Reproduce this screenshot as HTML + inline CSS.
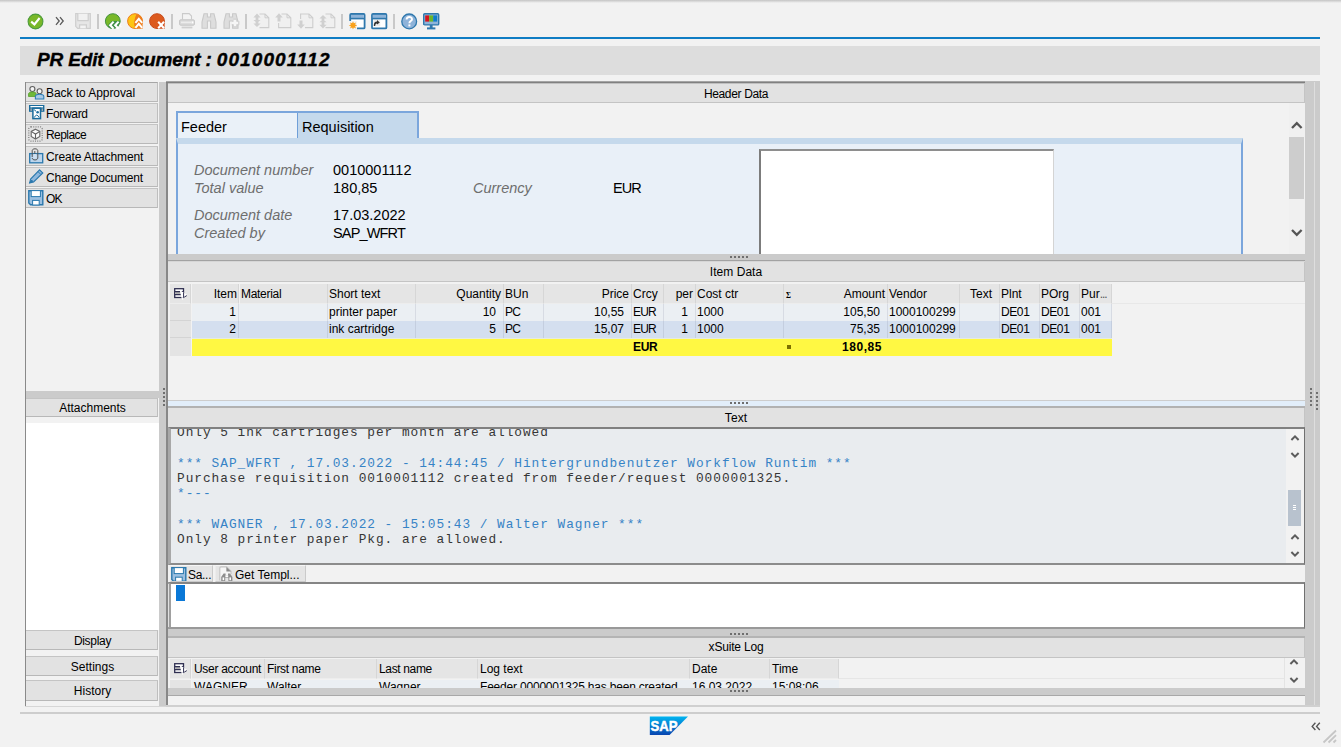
<!DOCTYPE html>
<html><head><meta charset="utf-8"><title>PR Edit Document</title>
<style>
*{box-sizing:border-box;margin:0;padding:0}
html,body{width:1341px;height:747px;overflow:hidden;background:#f2f2f2;font-family:"Liberation Sans",sans-serif;font-size:12px;color:#000}
.a{position:absolute}
svg{position:absolute;overflow:visible}
#topgrad{left:0;top:0;width:1341px;height:3px;background:linear-gradient(#c4c4c4,#f2f2f2)}
#blueline{left:20px;top:37px;width:1300px;height:2px;background:#0f7dc4}
#titlebar{left:20px;top:46px;width:1300px;height:29px;background:#dddddd}
#title{left:37px;top:48px;font-size:19px;font-weight:bold;font-style:italic;white-space:nowrap;line-height:24px;-webkit-text-stroke:.4px #000}
.tsep{position:absolute;top:14px;width:2px;height:15px;background:#c9c9c9;margin-left:-.5px}
/* left panel */
#lp{left:25px;top:82px;width:134px;height:624px;border-left:1px solid #8a8a8a}
.btn{position:absolute;left:0;width:132px;height:20px;background:#e2e2e2;border-top:1px solid #c4c4c4;border-bottom:1px solid #b8b8b8;border-right:1px solid #bebebe;line-height:18px;white-space:nowrap;font-size:12px}
.btn span{position:absolute;left:20px;top:1px}
.cbtn{text-align:center;line-height:20px;padding-left:2px}
.vs{position:absolute;background:#cbcbcb}
/* right panel */
.hdr{position:absolute;left:168px;width:1137px;background:#e2e2e2;text-align:center;font-size:12px;letter-spacing:-.35px;line-height:20px;height:19px;border-bottom:1px solid #c4c4c4;border-right:1px solid #c4c4c4}
.hs{position:absolute;left:168px;width:1137px;height:6px;background:#cbcbcb}
.dl{position:absolute;left:166px;width:1139px;height:1px;background:#8c8c8c}
.dots{position:absolute;left:730px;width:19px;height:2px;background:repeating-linear-gradient(90deg,#6e6e6e 0 2px,transparent 2px 4px)}
#statline{left:20px;top:712px;width:1300px;height:2px;background:#cdcdcd}
/* tabs */
.lbl{position:absolute;font-style:italic;color:#6e6e6e;font-size:14.5px;white-space:nowrap;line-height:18px}
.val{position:absolute;font-size:14.5px;white-space:nowrap;line-height:18px}
/* tables */
.th,.td{position:absolute;height:18px;line-height:17px;white-space:nowrap;font-size:12px;overflow:hidden}
.th{background:#e5e5e5;border-right:1px solid #d6d6d6;border-bottom:1px solid #ededed;height:20px;line-height:21px}
.r{text-align:right}
.mono{font-family:"Liberation Mono",monospace;font-size:12.8px;letter-spacing:.97px;line-height:15.34px;white-space:pre;position:absolute;left:6px;color:#363636}
.bl{color:#3683c6}
.sg{position:absolute;left:2px;top:0;font-family:"Liberation Serif",serif;font-weight:bold;font-size:7.5px;top:1px}
</style></head><body>
<div class="a" id="topgrad"></div>
<div class="a" id="blueline"></div>
<div class="a" id="titlebar"></div>
<div class="a" id="title"><span style="letter-spacing:-.15px">PR Edit Document : </span><span style="letter-spacing:1.1px">0010001112</span></div>
<div id="toolbar">
<svg style="left:27px;top:13px" width="17" height="17" viewBox="0 0 17 17"><circle cx="8.5" cy="8.5" r="7.4" fill="#7ab829" stroke="#4d9c3c" stroke-width="1.1"/><path d="M4.2 8.6 L7.4 11.4 L12.6 5" fill="none" stroke="#fff" stroke-width="2.1"/></svg>
<svg style="left:55px;top:16px" width="10" height="10" viewBox="0 0 10 10"><path d="M1 1.2 L4.2 5 L1 8.8 M5 1.2 L8.2 5 L5 8.8" fill="none" stroke="#5a5a5a" stroke-width="1.3"/></svg>
<svg style="left:75px;top:13px" width="16" height="16" viewBox="0 0 16 16"><path d="M.7 .7 H15.3 V15.3 H2.7 L.7 13.3 Z" fill="#e6e6e6" stroke="#cecece" stroke-width="1.2"/><path d="M2.8 .7 V7.6 H13.2 V.7" fill="#f1f1f1" stroke="#cecece" stroke-width="1.2"/><path d="M4.6 15.3 V11.8 H11.4 V15.3" fill="#f3f3f3" stroke="#cecece" stroke-width="1.2"/></svg>
<div class="tsep" style="left:97px"></div>
<svg style="left:105px;top:13px" width="17" height="17" viewBox="0 0 17 17"><circle cx="7.8" cy="8.1" r="7.4" fill="#79b829" stroke="#43923f" stroke-width="1"/><path d="M3 13.7 L3.6 11.2 L7 7.9 H15.2 A7.4 7.4 0 0 1 3 13.7 Z" fill="#3f8f46"/><path d="M8.6 8.6 L5.2 12.2 L8.6 15.8 M13.6 8.6 L10.2 12.2 L13.6 15.8" fill="none" stroke="#fff" stroke-width="2.1"/><path d="M16.4 10.2 L14.6 12.2 L16.4 14.2" fill="none" stroke="#fff" stroke-width="1.4" opacity=".7"/></svg>
<svg style="left:127px;top:13px" width="17" height="17" viewBox="0 0 17 17"><circle cx="8" cy="8.1" r="7.4" fill="#fdc513" stroke="#ee7d1c" stroke-width="1"/><path d="M9.6 .9 A7.6 7.6 0 0 1 15.6 8.1 V15.8 H8.4 Q6.6 12.4 7.2 8.4 Q7.8 4 9.6 .9Z" fill="#ee7d1c"/><path d="M8.4 9.8 L11.8 5.8 L15.2 9.8 M8.4 14.8 L11.8 10.8 L15.2 14.8" fill="none" stroke="#fff" stroke-width="2"/></svg>
<svg style="left:149px;top:13px" width="17" height="17" viewBox="0 0 17 17"><circle cx="8" cy="8.1" r="7.4" fill="#dc5a1e" stroke="#c94b1b" stroke-width="1"/><path d="M9 9 H15.6 V15.8 H9.6Z" fill="#d14e1b"/><path d="M9.2 8.8 L15 15.2 M15 8.8 L9.2 15.2" fill="none" stroke="#fff" stroke-width="2.1"/></svg>
<div class="tsep" style="left:171px"></div>
<svg style="left:179px;top:13px" width="16" height="16" viewBox="0 0 16 16"><path d="M3.5 6.5 V.6 H10.2 L12.5 3 V6.5" fill="#f4f4f4" stroke="#cbcbcb" stroke-width="1.1"/><rect x=".6" y="6.8" width="14.8" height="5.4" rx="1" fill="#d9d9d9" stroke="#c6c6c6" stroke-width="1"/><rect x="2" y="8.6" width="10" height="1.6" fill="#ececec"/><rect x="12.6" y="8.4" width="1.8" height="2" fill="#fff"/><rect x="2.6" y="13.6" width="10.8" height="1.8" fill="#cfcfcf"/></svg>
<svg style="left:201px;top:13px" width="16" height="16" viewBox="0 0 16 16"><path d="M3 .8 H6.4 V4 H9.6 V.8 H13 L15 9 V15.2 H9.6 V8 H6.4 V15.2 H1 V9 Z" fill="#dedede" stroke="#c9c9c9" stroke-width="1.1"/></svg>
<svg style="left:223px;top:13px" width="17" height="16" viewBox="0 0 17 16"><path d="M3 .8 H6.4 V4 H9.6 V.8 H13 L15 9 V15.2 H9.6 V8 H6.4 V15.2 H1 V9 Z" fill="#dedede" stroke="#c9c9c9" stroke-width="1.1"/><path d="M12 7 V13 M9 10 H15" stroke="#f6f6f6" stroke-width="2.4"/><path d="M10.2 6 H13.8 V8.2 H16 V11.8 H13.8 V14 H10.2 V11.8 H8.6" fill="none" stroke="#cfcfcf" stroke-width=".8"/></svg>
<div class="tsep" style="left:245px"></div>
<svg style="left:253px;top:13px" width="17" height="16" viewBox="0 0 17 16"><path d="M6.5 1 H12 L15.8 4.8 V14.6 H6.5" fill="#f0f0f0" stroke="#cdcdcd" stroke-width="1.1"/><path d="M12 1 V4.8 H15.8" fill="none" stroke="#cdcdcd" stroke-width="1"/><path d="M4 .5 L7.6 4.4 H5.4 V7 H7.6 L4 10 L.4 7 H2.6 V4.4 H.4Z M4 14 L.4 10.6 H2.6 V9 H5.4 V10.6 H7.6Z" fill="#d0d0d0"/></svg>
<svg style="left:275px;top:13px" width="17" height="16" viewBox="0 0 17 16"><path d="M6.5 1 H12 L15.8 4.8 V14.6 H3.6 V10" fill="#f0f0f0" stroke="#cdcdcd" stroke-width="1.1"/><path d="M12 1 V4.8 H15.8" fill="none" stroke="#cdcdcd" stroke-width="1"/><path d="M4 .3 L7.8 4.6 H5.5 V8.6 H2.5 V4.6 H.2Z" fill="#d0d0d0"/></svg>
<svg style="left:297px;top:13px" width="17" height="16" viewBox="0 0 17 16"><path d="M3.6 6 V1 H12 L15.8 4.8 V14.6 H8" fill="#f0f0f0" stroke="#cdcdcd" stroke-width="1.1"/><path d="M12 1 V4.8 H15.8" fill="none" stroke="#cdcdcd" stroke-width="1"/><path d="M4 15.8 L7.8 11.4 H5.5 V7.4 H2.5 V11.4 H.2Z" fill="#d0d0d0"/></svg>
<svg style="left:319px;top:13px" width="17" height="16" viewBox="0 0 17 16"><path d="M6.5 1 H12 L15.8 4.8 V14.6 H6.5" fill="#f0f0f0" stroke="#cdcdcd" stroke-width="1.1"/><path d="M12 1 V4.8 H15.8" fill="none" stroke="#cdcdcd" stroke-width="1"/><path d="M4 15.6 L.4 11.8 H2.6 V9.2 H.4 L4 6.2 L7.6 9.2 H5.4 V11.8 H7.6Z M4 2 L7.6 5.4 H5.4 V7 H2.6 V5.4 H.4Z" fill="#d0d0d0"/></svg>
<div class="tsep" style="left:341px"></div>
<svg style="left:349px;top:13px" width="17" height="17" viewBox="0 0 17 17"><rect x="1.2" y="1" width="14.4" height="14.4" rx="1" fill="#fff" stroke="#2f78ad" stroke-width="1.8"/><rect x="2" y="1.8" width="12.8" height="3.2" fill="#8fb4d9"/><path d="M1.2 5.6 H15.6" stroke="#2f78ad" stroke-width="1.6"/><rect x="0" y="8" width="8" height="9" fill="#f2f2f2"/><path d="M4 8.2 L4.9 10.3 L7 9.4 L6.1 11.5 L8.2 12.4 L6.1 13.3 L7 15.4 L4.9 14.5 L4 16.6 L3.1 14.5 L1 15.4 L1.9 13.3 L-.2 12.4 L1.9 11.5 L1 9.4 L3.1 10.3Z" fill="#f9a11b"/></svg>
<svg style="left:371px;top:13px" width="17" height="17" viewBox="0 0 17 17"><rect x="1" y="1" width="14.4" height="14.4" rx="1" fill="#fff" stroke="#2f78ad" stroke-width="1.8"/><rect x="1.8" y="1.8" width="12.8" height="3.2" fill="#8fb4d9"/><path d="M1 5.6 H15.4" stroke="#2f78ad" stroke-width="1.6"/><rect x="2.6" y="6.8" width="6.6" height="6.4" fill="#000" opacity=".08"/><path d="M2.8 13 C2.6 10 4 8.6 6 8.6 V7 L8.8 9.4 L6 11.6 V10.4 C4.8 10.4 4.2 11.2 4.2 13Z" fill="#333"/></svg>
<div class="tsep" style="left:393px"></div>
<svg style="left:401px;top:13px" width="17" height="17" viewBox="0 0 17 17"><circle cx="8.2" cy="8.4" r="7.4" fill="#8fb3d9" stroke="#2f78ad" stroke-width="1.3"/><path d="M5.6 6.4 C5.6 3.2 11 3.2 11 6.2 C11 8.2 8.4 8 8.4 10.2" fill="none" stroke="#fff" stroke-width="1.9"/><rect x="7.4" y="11.4" width="2" height="2" fill="#fff"/></svg>
<svg style="left:423px;top:13px" width="17" height="17" viewBox="0 0 17 17"><rect x=".7" y=".7" width="15" height="11.2" rx="1" fill="#8fb4d9" stroke="#2f78ad" stroke-width="1.4"/><rect x="2.2" y="2.4" width="4" height="6.2" fill="#d4141c"/><rect x="6.2" y="2.4" width="4" height="6.2" fill="#6bb52a"/><rect x="10.2" y="2.4" width="4" height="6.2" fill="#0f7dc8"/><rect x="6.8" y="12" width="2.8" height="3" fill="#2f78ad"/><rect x="4" y="14.4" width="8.4" height="2" fill="#2f78ad"/></svg>
</div>

<div class="a" id="lp">
 <div class="btn" style="top:0;border-top-color:#a6a6a6"><svg style="left:2px;top:3px" width="17" height="14" viewBox="0 0 17 14"><circle cx="4.4" cy="3" r="2.5" fill="#f4f4f4" stroke="#5e5e5e" stroke-width="1.1"/><path d="M.5 10.5 V8.2 C.5 6.6 2 6 4.4 6 C6.8 6 8.3 6.6 8.3 8.2 V10.5Z" fill="#6fb83a" stroke="#58a02c" stroke-width=".8"/><circle cx="11.6" cy="5.2" r="2.5" fill="#f4f4f4" stroke="#5e5e5e" stroke-width="1.1"/><path d="M7.4 13 V10.6 C7.4 9 9 8.3 11.6 8.3 C14.2 8.3 15.8 9 15.8 10.6 V13Z" fill="#a9c9e6" stroke="#2f7fb8" stroke-width="1.1"/></svg><span style="letter-spacing:-0.06px">Back to Approval</span></div>
 <div class="btn" style="top:21px"><svg style="left:3px;top:1px" width="16" height="15" viewBox="0 0 16 15"><rect x="0" y="0" width="15.4" height="6.8" fill="#1b6c9c"/><rect x="1.4" y="1" width="12.6" height="1.4" fill="#fff"/><rect x="1.4" y="3.4" width="1.5" height="2.6" fill="#9aa6ae"/><rect x="12.5" y="3.4" width="1.5" height="2.6" fill="#9aa6ae"/><rect x="3.9" y="3.2" width="7.6" height="10.4" fill="#fff" stroke="#1b6c9c" stroke-width="1.5"/><circle cx="8.6" cy="7.2" r="1.3" fill="#1b6c9c"/><path d="M5.2 12.6 Q7.7 7.6 10.2 12.6 M5 4.6 L7 6.2" fill="none" stroke="#1b6c9c" stroke-width="1"/></svg><span style="letter-spacing:-0.33px">Forward</span></div>
 <div class="btn" style="top:42px"><svg style="left:2px;top:1px" width="15" height="16" viewBox="0 0 15 16"><rect x=".8" y=".8" width="13.4" height="14.4" rx="2.2" fill="none" stroke="#808080" stroke-width="1.2" stroke-dasharray="1 1.25"/><path d="M7.5 3.2 L11.8 5.4 V10.4 L7.5 13 L3.2 10.4 V5.4Z" fill="#fbfbfb" stroke="#6a6a6a" stroke-width="1.1"/><path d="M3.4 5.6 L7.5 8 L11.6 5.6 M7.5 8 V12.8" fill="none" stroke="#606060" stroke-width="1.1"/></svg><span style="letter-spacing:-0.55px">Replace</span></div>
 <div class="btn" style="top:64px"><svg style="left:3px;top:1px" width="15" height="16" viewBox="0 0 15 16"><rect x=".7" y="5.6" width="13" height="9.2" fill="#bcd5ec" stroke="#2a78ad" stroke-width="1.3"/><path d="M3.2 9 V2.6 C3.2 .2 8.8 .2 8.8 2.6 V10 C8.8 12.6 3.2 12.6 3.2 10 M5.8 3 V9" fill="none" stroke="#555" stroke-width="1"/><path d="M4.4 6 V10 C4.4 11 7.4 11 7.4 10 V6" fill="#cfe0f0" stroke="none"/></svg><span style="letter-spacing:-0.13px">Create Attachment</span></div>
 <div class="btn" style="top:85px"><svg style="left:3px;top:1px" width="15" height="15" viewBox="0 0 15 15"><path d="M10.6 .8 L13.8 4 L4.6 13 L.6 14 L1.6 10Z" fill="#8fb8dd" stroke="#2a78ad" stroke-width="1.1"/><path d="M9 2.6 L12 5.6 M.8 13.8 L2.6 11 L3.8 12.4Z" fill="#2a78ad" stroke="#2a78ad" stroke-width="1"/></svg><span style="letter-spacing:-0.22px">Change Document</span></div>
 <div class="btn" style="top:106px"><svg style="left:2px;top:1px" width="16" height="16" viewBox="0 0 16 16"><path d="M.8 .8 H14.8 V14.8 H2.6 L.8 13Z" fill="#9dc0e0" stroke="#2a78ad" stroke-width="1.4"/><rect x="3.2" y=".6" width="9.2" height="6" fill="#fff" stroke="#2a78ad" stroke-width="1"/><rect x="4.6" y="10.4" width="6.6" height="4.6" fill="#fff" stroke="#2a78ad" stroke-width="1"/></svg><span style="letter-spacing:-0.9px">OK</span></div>
 <div class="vs" style="left:0;top:309px;width:133px;height:7px"></div>
 <div class="btn cbtn" style="top:316px;height:19px;line-height:19px">Attachments</div>
 <div class="a" style="left:0;top:341px;width:133px;height:207px;background:#fff"></div>
 <div class="btn cbtn" style="top:548px;letter-spacing:-.3px">Display</div>
 <div class="btn cbtn" style="top:574px">Settings</div>
 <div class="btn cbtn" style="top:598px;height:21px">History</div>
</div>
<div class="vs" style="left:159px;top:82px;width:7px;height:624px"></div>
<div class="vs" style="left:1305px;top:81px;width:15px;height:625px"></div>
<div class="a" style="left:1314px;top:82px;width:1px;height:624px;background:#dedede"></div>
<div class="a" style="left:166px;top:81px;width:2px;height:625px;background:#888"></div>

<div class="a" style="left:163px;top:388px;width:2px;height:18px;background:repeating-linear-gradient(180deg,#707070 0 2px,transparent 2px 4px)"></div>
<div class="a" style="left:1310px;top:388px;width:2px;height:18px;background:repeating-linear-gradient(180deg,#707070 0 2px,transparent 2px 4px)"></div>
<div class="a" style="left:1316px;top:392px;width:2px;height:18px;background:repeating-linear-gradient(180deg,#707070 0 2px,transparent 2px 4px)"></div>
<!-- Header Data -->
<div class="dl" style="top:81px;height:1px;background:#a4a4a4"></div><div class="dl" style="top:82px;height:1px;background:#808080"></div><div class="dl" style="top:83px;left:168px;width:1137px;height:1px;background:#c0c0c0"></div>
<div class="hdr" style="top:84px">Header Data</div>
<div id="tabs">
 <div class="a" style="left:176px;top:111px;width:243px;height:28px;background:#eaf1f8;border:2px solid #7ba6dc;border-bottom:none"></div>
 <div class="a" style="left:297px;top:113px;width:120px;height:26px;background:#c5d9ec;border-left:1px solid #6f9fd8"></div>
 <div class="a" style="left:176px;top:138px;width:1067px;height:116px;background:#e9f0f8;border-left:2px solid #7ba6dc;border-right:2px solid #7ba6dc;border-top:6px solid #c5d9ec"></div>
 <div class="val" style="left:181px;top:118px">Feeder</div>
 <div class="val" style="left:302px;top:118px">Requisition</div>
 <div class="lbl" style="left:194px;top:161px">Document number</div><div class="val" style="left:333px;top:161px">0010001112</div>
 <div class="lbl" style="left:194px;top:179px">Total value</div><div class="val" style="left:333px;top:179px">180,85</div>
 <div class="lbl" style="left:473px;top:179px">Currency</div><div class="val" style="left:613px;top:179px;letter-spacing:-1px">EUR</div>
 <div class="lbl" style="left:194px;top:206px">Document date</div><div class="val" style="left:333px;top:206px">17.03.2022</div>
 <div class="lbl" style="left:194px;top:224px">Created by</div><div class="val" style="left:333px;top:224px;letter-spacing:-.85px">SAP_WFRT</div>
 <div class="a" style="left:759px;top:149px;width:295px;height:105px;background:#fff;border-top:2px solid #8e8e8e;border-left:2px solid #7c7c7c;border-right:1px solid #d4d4d4"></div>
 <!-- scrollbar -->
 <div class="a" style="left:1289px;top:103px;width:16px;height:151px;background:#f0f0f0"></div>
 <div class="a" style="left:1289px;top:137px;width:15px;height:62px;background:#cdcdcd"></div>
 <svg style="left:1289px;top:118px" width="16" height="14"><path d="M3 10 L7.8 5.2 L12.6 10" fill="none" stroke="#555" stroke-width="2.3"/></svg>
 <svg style="left:1289px;top:225px" width="16" height="14"><path d="M3 5 L7.8 9.8 L12.6 5" fill="none" stroke="#555" stroke-width="2.3"/></svg>
</div>

<!-- Item Data -->
<div class="hs" style="top:254px"></div><div class="dots" style="top:256px"></div>
<div class="dl" style="left:168px;width:1137px;top:260px;background:#a2a2a2"></div><div class="dl" style="left:168px;width:1137px;top:261px;background:#d6d6d6"></div>
<div class="hdr" style="top:262px;height:20px;line-height:20px;letter-spacing:.05px">Item Data</div>
<div id="items">
<div class="th" style="left:170px;top:284px;width:21px"><svg style="left:4px;top:4px" width="14" height="12" viewBox="0 0 14 12"><rect x=".7" y=".7" width="8.8" height="8.8" fill="#fff" stroke="#2e2e50" stroke-width="1.3"/><rect x="1.3" y="4" width="7.6" height="2.2" fill="#b0b0b0"/><path d="M.7 3.6 H9.5 M.7 6.6 H9.5" stroke="#2e2e50" stroke-width="1.1"/><path d="M6.8 3.6 L12.4 7.3 L9.7 8 L8.6 10.8 Z" fill="#fff" stroke="#fff" stroke-width="1.6" stroke-linejoin="round"/><path d="M9.6 4.6 V9.6 H8.8 M10.4 9 L12.8 7.6" fill="none" stroke="#2e2e50" stroke-width="1"/></svg></div>
<div class="th" style="left:192px;top:284px;width:47px;padding-right:1px;text-align:right">Item</div>
<div class="th" style="left:240px;top:284px;width:88px;padding-left:1px;letter-spacing:-.3px">Material</div>
<div class="th" style="left:328px;top:284px;width:88px;padding-left:1px">Short text</div>
<div class="th" style="left:416px;top:284px;width:88px;padding-right:2px;text-align:right">Quantity</div>
<div class="th" style="left:504px;top:284px;width:40px;padding-left:1px">BUn</div>
<div class="th" style="left:544px;top:284px;width:88px;padding-right:2px;text-align:right">Price</div>
<div class="th" style="left:632px;top:284px;width:32px;padding-left:1px">Crcy</div>
<div class="th" style="left:664px;top:284px;width:32px;padding-right:2px;text-align:right">per</div>
<div class="th" style="left:696px;top:284px;width:88px;padding-left:1px">Cost ctr</div>
<div class="th" style="left:784px;top:284px;width:16px;border-right:none"><span class="sg">&#931;</span></div>
<div class="th" style="left:800px;top:284px;width:88px;padding-right:2px;text-align:right">Amount</div>
<div class="th" style="left:888px;top:284px;width:72px;padding-left:1px">Vendor</div>
<div class="th" style="left:960px;top:284px;width:40px;padding-right:7px;text-align:right">Text</div>
<div class="th" style="left:1000px;top:284px;width:40px;padding-left:1px">Plnt</div>
<div class="th" style="left:1040px;top:284px;width:40px;padding-left:1px">POrg</div>
<div class="th" style="left:1080px;top:284px;width:32px;padding-left:1px">Pur<span style="letter-spacing:-1px;color:#555">...</span></div>
<div class="a" style="left:170px;top:304px;width:21px;height:17px;background:#e4e4e4;border-bottom:1px solid #d4d4d4"></div>
<div class="a" style="left:192px;top:304px;width:920px;height:17px;background:#ebeff3"></div>
<div class="td" style="left:192px;top:304px;width:47px;border-right:1px solid rgba(110,120,140,.16);padding-right:2px;text-align:right">1</div>
<div class="td" style="left:240px;top:304px;width:88px;border-right:1px solid rgba(110,120,140,.16);padding-left:1px"></div>
<div class="td" style="left:328px;top:304px;width:88px;border-right:1px solid rgba(110,120,140,.16);padding-left:1px">printer paper</div>
<div class="td" style="left:416px;top:304px;width:88px;border-right:1px solid rgba(110,120,140,.16);padding-right:7px;text-align:right">10</div>
<div class="td" style="left:504px;top:304px;width:40px;border-right:1px solid rgba(110,120,140,.16);padding-left:1px;letter-spacing:-.8px">PC</div>
<div class="td" style="left:544px;top:304px;width:88px;border-right:1px solid rgba(110,120,140,.16);padding-right:7px;text-align:right">10,55</div>
<div class="td" style="left:632px;top:304px;width:32px;border-right:1px solid rgba(110,120,140,.16);padding-left:1px;letter-spacing:-.8px">EUR</div>
<div class="td" style="left:664px;top:304px;width:32px;border-right:1px solid rgba(110,120,140,.16);padding-right:7px;text-align:right">1</div>
<div class="td" style="left:696px;top:304px;width:88px;border-right:1px solid rgba(110,120,140,.16);padding-left:1px">1000</div>
<div class="td" style="left:784px;top:304px;width:16px;padding-left:1px"></div>
<div class="td" style="left:800px;top:304px;width:88px;border-right:1px solid rgba(110,120,140,.16);padding-right:7px;text-align:right">105,50</div>
<div class="td" style="left:888px;top:304px;width:72px;border-right:1px solid rgba(110,120,140,.16);padding-left:1px">1000100299</div>
<div class="td" style="left:960px;top:304px;width:40px;border-right:1px solid rgba(110,120,140,.16);padding-right:7px;text-align:right"></div>
<div class="td" style="left:1000px;top:304px;width:40px;border-right:1px solid rgba(110,120,140,.16);padding-left:1px;letter-spacing:-.4px">DE01</div>
<div class="td" style="left:1040px;top:304px;width:40px;border-right:1px solid rgba(110,120,140,.16);padding-left:1px;letter-spacing:-.4px">DE01</div>
<div class="td" style="left:1080px;top:304px;width:32px;border-right:1px solid rgba(110,120,140,.16);padding-left:1px">001</div>
<div class="a" style="left:170px;top:321px;width:21px;height:17px;background:#e4e4e4;border-bottom:1px solid #d4d4d4"></div>
<div class="a" style="left:192px;top:321px;width:920px;height:17px;background:#d4dfef"></div>
<div class="td" style="left:192px;top:321px;width:47px;border-right:1px solid rgba(110,120,140,.16);padding-right:2px;text-align:right">2</div>
<div class="td" style="left:240px;top:321px;width:88px;border-right:1px solid rgba(110,120,140,.16);padding-left:1px"></div>
<div class="td" style="left:328px;top:321px;width:88px;border-right:1px solid rgba(110,120,140,.16);padding-left:1px">ink cartridge</div>
<div class="td" style="left:416px;top:321px;width:88px;border-right:1px solid rgba(110,120,140,.16);padding-right:7px;text-align:right">5</div>
<div class="td" style="left:504px;top:321px;width:40px;border-right:1px solid rgba(110,120,140,.16);padding-left:1px;letter-spacing:-.8px">PC</div>
<div class="td" style="left:544px;top:321px;width:88px;border-right:1px solid rgba(110,120,140,.16);padding-right:7px;text-align:right">15,07</div>
<div class="td" style="left:632px;top:321px;width:32px;border-right:1px solid rgba(110,120,140,.16);padding-left:1px;letter-spacing:-.8px">EUR</div>
<div class="td" style="left:664px;top:321px;width:32px;border-right:1px solid rgba(110,120,140,.16);padding-right:7px;text-align:right">1</div>
<div class="td" style="left:696px;top:321px;width:88px;border-right:1px solid rgba(110,120,140,.16);padding-left:1px">1000</div>
<div class="td" style="left:784px;top:321px;width:16px;padding-left:1px"></div>
<div class="td" style="left:800px;top:321px;width:88px;border-right:1px solid rgba(110,120,140,.16);padding-right:7px;text-align:right">75,35</div>
<div class="td" style="left:888px;top:321px;width:72px;border-right:1px solid rgba(110,120,140,.16);padding-left:1px">1000100299</div>
<div class="td" style="left:960px;top:321px;width:40px;border-right:1px solid rgba(110,120,140,.16);padding-right:7px;text-align:right"></div>
<div class="td" style="left:1000px;top:321px;width:40px;border-right:1px solid rgba(110,120,140,.16);padding-left:1px;letter-spacing:-.4px">DE01</div>
<div class="td" style="left:1040px;top:321px;width:40px;border-right:1px solid rgba(110,120,140,.16);padding-left:1px;letter-spacing:-.4px">DE01</div>
<div class="td" style="left:1080px;top:321px;width:32px;border-right:1px solid rgba(110,120,140,.16);padding-left:1px">001</div>
<div class="a" style="left:170px;top:338px;width:21px;height:18px;background:#e4e4e4"></div>
<div class="a" style="left:192px;top:338px;width:920px;height:18px;background:#fff843;border-top:1px solid #e6ebe0"></div>
<div class="td" style="left:632px;top:338px;width:40px;padding-left:1px;font-weight:bold;letter-spacing:-.3px;height:18px;line-height:18px">EUR</div>
<div class="a" style="left:787px;top:345px;width:4px;height:4px;background:#7d7000"></div>
<div class="td r" style="left:800px;top:338px;width:88px;padding-right:6px;font-weight:bold;letter-spacing:.55px;height:18px;line-height:18px">180,85</div>
<div class="a" style="left:1112px;top:303px;width:193px;height:1px;background:#e8e8e8"></div>
</div>
<div class="a" style="left:168px;top:400px;width:1137px;height:6px;background:#e2eefa;border-top:1px solid #cdcdcd"></div>
<div class="dots" style="top:402px"></div>

<!-- Text -->
<div class="dl" style="left:168px;width:1137px;top:406px;height:2px;background:#b2b2b2"></div>
<div class="hdr" style="top:408px;border-bottom:none;letter-spacing:.1px">Text</div>
<div class="a" id="ta" style="left:168px;top:427px;width:1137px;height:138px;background:#e9ecef;border-top:2px solid #808080;border-left:3px solid #a8a8a8;border-right:1px solid #707070;border-bottom:2px solid #8c8c8c;overflow:hidden">
<div class="a" style="left:-3px;top:0;width:1px;height:137px;background:#ececec"></div>
<div class="a" style="left:1115px;top:0;width:18px;height:134px;background:#f2f2f2"></div>
<div class="a" style="left:1117px;top:61px;width:13px;height:36px;background:#b8c2ce"></div>
<div class="a" style="left:1122px;top:76px;width:3px;height:1px;background:#fff;box-shadow:0 2px 0 #fff,0 4px 0 #fff"></div>
<svg style="left:1119px;top:5px" width="10" height="8"><path d="M1.4 6 L5 2.4 L8.6 6" fill="none" stroke="#5c5c5c" stroke-width="2"/></svg>
<svg style="left:1119px;top:22px" width="10" height="8"><path d="M1.4 2 L5 5.6 L8.6 2" fill="none" stroke="#5c5c5c" stroke-width="2"/></svg>
<svg style="left:1119px;top:104px" width="10" height="8"><path d="M1.4 6 L5 2.4 L8.6 6" fill="none" stroke="#5c5c5c" stroke-width="2"/></svg>
<svg style="left:1119px;top:121px" width="10" height="8"><path d="M1.4 2 L5 5.6 L8.6 2" fill="none" stroke="#5c5c5c" stroke-width="2"/></svg>
<div class="mono" style="top:-4px">Only 5 ink cartridges per month are allowed

<span class="bl">*** SAP_WFRT , 17.03.2022 - 14:44:45 / Hintergrundbenutzer Workflow Runtim ***</span>
Purchase requisition 0010001112 created from feeder/request 0000001325.
<span class="bl">*---</span>

<span class="bl">*** WAGNER , 17.03.2022 - 15:05:43 / Walter Wagner ***</span>
Only 8 printer paper Pkg. are allowed.</div>
</div>
<div class="a" style="left:170px;top:565px;width:43px;height:17px;background:#e5e5e5;border:1px solid #cacaca;border-top-color:#f6f6f6;border-left-color:#ececec;font-size:12px;letter-spacing:-.3px;line-height:19px;padding-left:17px;white-space:nowrap;overflow:hidden"><svg style="left:0;top:1px" width="16" height="15" viewBox="0 0 16 15"><path d="M.8 .8 H14.8 V14.2 H2.6 L.8 12.4Z" fill="#9dc0e0" stroke="#2a78ad" stroke-width="1.4"/><rect x="3.2" y=".6" width="9.2" height="6" fill="#fff" stroke="#2a78ad" stroke-width="1"/><rect x="4.6" y="10.2" width="6.6" height="4.2" fill="#fff" stroke="#2a78ad" stroke-width="1"/></svg>Sa...</div>
<div class="a" style="left:215px;top:565px;width:91px;height:17px;background:#e5e5e5;border:1px solid #cacaca;border-top-color:#f6f6f6;border-left-color:#ececec;font-size:12px;line-height:19px;padding-left:19px;white-space:nowrap;overflow:hidden"><svg style="left:3px;top:0" width="15" height="16" viewBox="0 0 15 16"><path d="M.8 14.6 V2 Q.8 .9 2 .9 H7.6 L12 5.2 V8" fill="#f6f6f6" stroke="#c4c4c4" stroke-width="1.1"/><path d="M7.4 .9 V5.4 H12Z" fill="#8a8a8a"/><path d="M4.6 7.6 H6.6 V9 H9 V7.6 H11 L13.4 11 V15 H9.4 V11.8 H6.2 V15 H2.2 V11Z" fill="#8e8e8e"/><rect x="3.6" y="11.4" width="1.6" height="2.8" fill="#fff"/><rect x="10.4" y="11.4" width="1.6" height="2.8" fill="#fff"/><rect x="6.4" y="9.2" width="2.8" height="2" fill="#fff"/></svg>Get Templ...</div>
<div class="a" style="left:168px;top:582px;width:1137px;height:47px;background:#fff;border-top:2px solid #858585;border-left:3px solid #a0a0a0;border-right:1px solid #707070;border-bottom:2px solid #999"></div><div class="a" style="left:168px;top:584px;width:1px;height:43px;background:#e0e0e0"></div>
<div class="a" style="left:176px;top:585px;width:9px;height:16px;background:#0a78d7"></div>

<!-- xSuite Log -->
<div class="hs" style="top:629px;height:9px;border-bottom:2px solid #b4b4b4"></div><div class="dots" style="top:633px"></div>
<div class="hdr" style="top:638px;height:20px;line-height:19px;letter-spacing:-.19px">xSuite Log</div>
<div id="log">
<div class="th" style="left:170px;top:659px;width:21px"><svg style="left:4px;top:4px" width="14" height="12" viewBox="0 0 14 12"><rect x=".7" y=".7" width="8.8" height="8.8" fill="#fff" stroke="#2e2e50" stroke-width="1.3"/><rect x="1.3" y="4" width="7.6" height="2.2" fill="#b0b0b0"/><path d="M.7 3.6 H9.5 M.7 6.6 H9.5" stroke="#2e2e50" stroke-width="1.1"/><path d="M6.8 3.6 L12.4 7.3 L9.7 8 L8.6 10.8 Z" fill="#fff" stroke="#fff" stroke-width="1.6" stroke-linejoin="round"/><path d="M9.6 4.6 V9.6 H8.8 M10.4 9 L12.8 7.6" fill="none" stroke="#2e2e50" stroke-width="1"/></svg></div>
<div class="th" style="left:192px;top:659px;width:73px;padding-left:2px;letter-spacing:-0.3px">User account</div>
<div class="th" style="left:265px;top:659px;width:112px;padding-left:2px;letter-spacing:-0.3px">First name</div>
<div class="th" style="left:377px;top:659px;width:101px;padding-left:2px;letter-spacing:-0.35px">Last name</div>
<div class="th" style="left:478px;top:659px;width:212px;padding-left:2px;letter-spacing:0px">Log text</div>
<div class="th" style="left:690px;top:659px;width:80px;padding-left:2px;letter-spacing:0px">Date</div>
<div class="th" style="left:770px;top:659px;width:69px;padding-left:2px;letter-spacing:0px">Time</div>
<div class="a" style="left:170px;top:680px;width:21px;height:9px;background:#e4e4e4"></div>
<div class="a" style="left:192px;top:680px;width:647px;height:9px;background:#ebeff3"></div>
<div class="td" style="left:192px;top:680px;width:73px;height:9px;padding-left:2px;letter-spacing:0px;line-height:15px">WAGNER</div>
<div class="td" style="left:265px;top:680px;width:112px;height:9px;padding-left:2px;letter-spacing:0px;line-height:15px">Walter</div>
<div class="td" style="left:377px;top:680px;width:101px;height:9px;padding-left:2px;letter-spacing:0px;line-height:15px">Wagner</div>
<div class="td" style="left:478px;top:680px;width:212px;height:9px;padding-left:2px;letter-spacing:-0.2px;line-height:15px">Feeder 0000001325 has been created</div>
<div class="td" style="left:690px;top:680px;width:80px;height:9px;padding-left:2px;letter-spacing:0px;line-height:15px">16.03.2022</div>
<div class="td" style="left:770px;top:680px;width:69px;height:9px;padding-left:2px;letter-spacing:0px;line-height:15px">15:08:06</div>
</div>
<div class="a" style="left:839px;top:678px;width:446px;height:1px;background:#e6e6e6"></div>
<div class="a" style="left:1284px;top:658px;width:1px;height:30px;background:#e4e4e4"></div>
<svg style="left:1289px;top:658px" width="10" height="8"><path d="M1.4 6 L5 2.4 L8.6 6" fill="none" stroke="#5c5c5c" stroke-width="2"/></svg>
<svg style="left:1289px;top:676px" width="10" height="8"><path d="M1.4 2 L5 5.6 L8.6 2" fill="none" stroke="#5c5c5c" stroke-width="2"/></svg>
<div class="hs" style="top:688px;height:8px;border-bottom:1px solid #a8a8a8"></div><div class="dots" style="top:690px"></div>
<div class="a" style="left:25px;top:706px;width:141px;height:1px;background:#d6d6d6"></div><div class="a" style="left:166px;top:705px;width:1154px;height:2px;background:#d0d0d0"></div>

<div class="a" id="statline"></div>
<svg style="left:649px;top:716px" width="40" height="20" viewBox="0 0 40 20"><defs><linearGradient id="sapg" x1="0" y1="0" x2="0" y2="1"><stop offset="0" stop-color="#00b4f0"/><stop offset="1" stop-color="#0a45b0"/></linearGradient></defs><path d="M.8 .6 H39 L20.6 19 H.8Z" fill="url(#sapg)"/><text x="1.6" y="14.9" font-family="Liberation Sans,sans-serif" font-weight="bold" font-size="15.5" fill="#fff" textLength="27" lengthAdjust="spacingAndGlyphs" stroke="#fff" stroke-width=".5">SAP</text></svg>
<svg style="left:1311px;top:722px" width="10" height="9" viewBox="0 0 10 9"><path d="M4.4 .8 L1.2 4.4 L4.4 8 M8.8 .8 L5.6 4.4 L8.8 8" fill="none" stroke="#555" stroke-width="1.4"/></svg>
<svg style="left:1322px;top:729px" width="16" height="16" viewBox="0 0 16 16"><path d="M1.5 13.5 L14 1.5 M6.5 13.5 L14 6.2 M11.5 13.5 L14 11" stroke="#c6c6c6" stroke-width="1.8" fill="none"/></svg>
</body></html>
